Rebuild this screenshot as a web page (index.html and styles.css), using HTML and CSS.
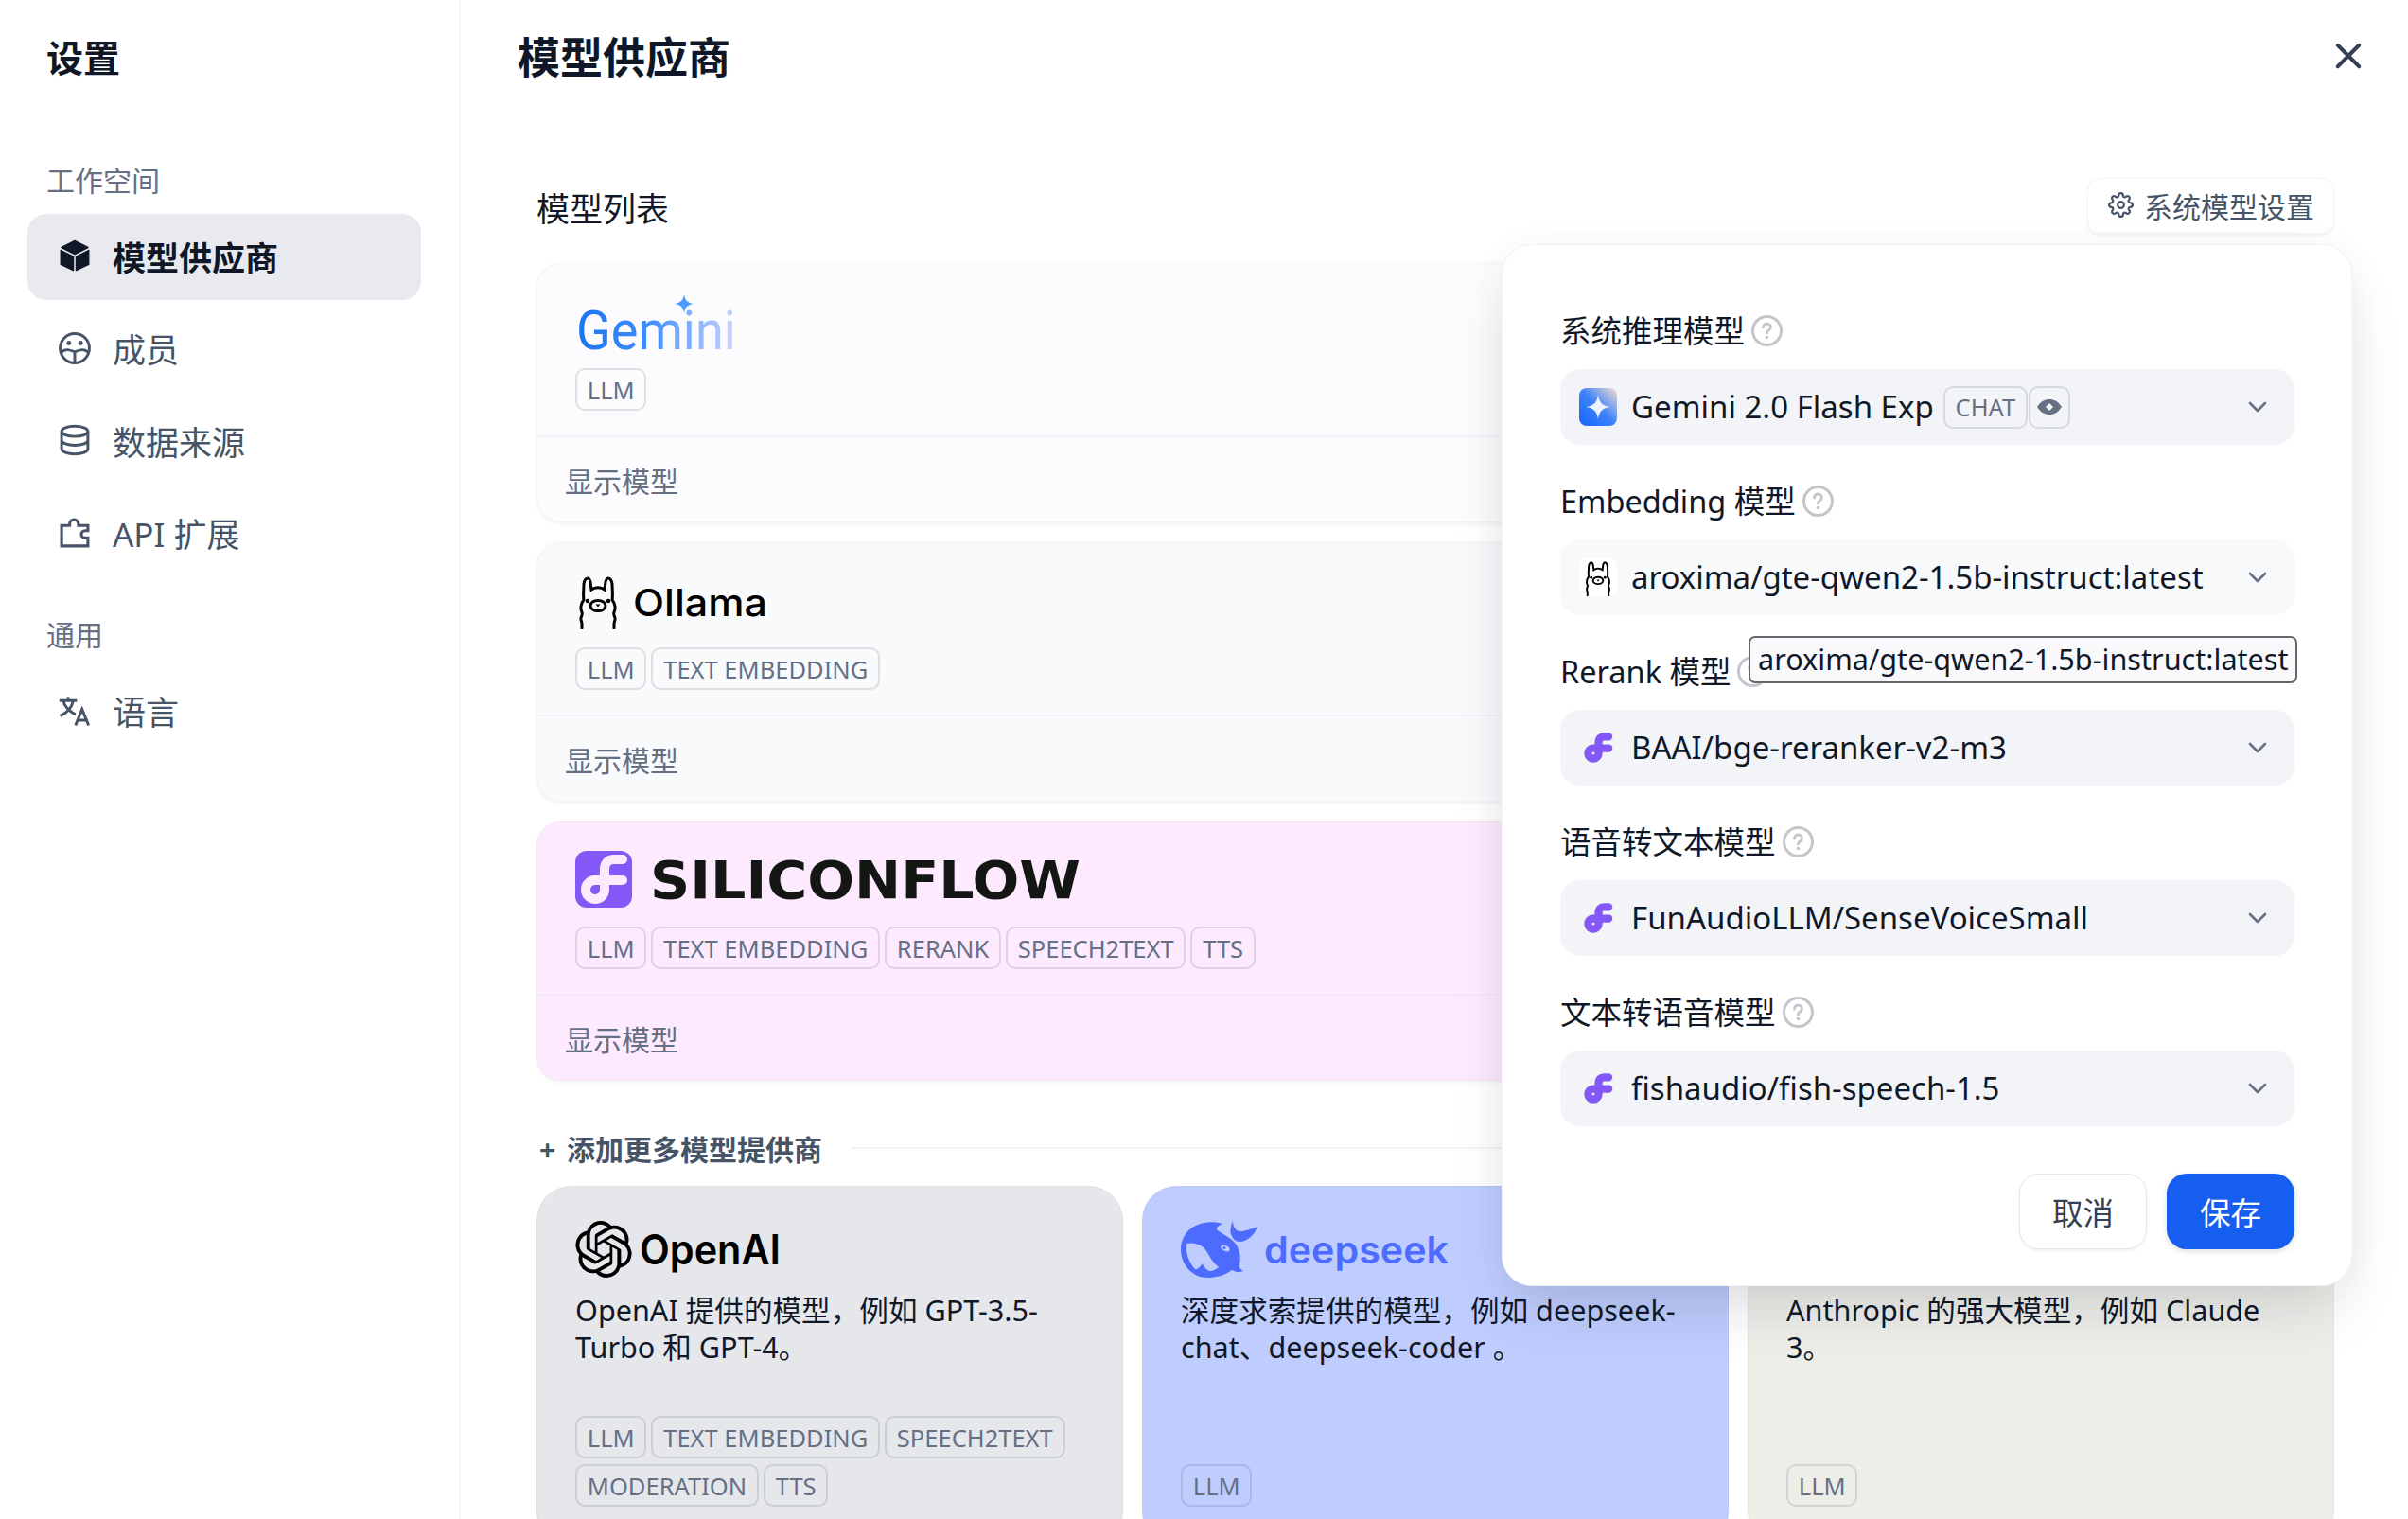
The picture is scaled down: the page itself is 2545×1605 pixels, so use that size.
FILE: index.html
```html
<!DOCTYPE html>
<html lang="zh-CN">

<head>
  <meta charset="UTF-8">
  <meta name="viewport" content="width=device-width, initial-scale=1.0">
  <title>设置 - 模型供应商</title>
  <link rel="stylesheet" href="styles.css">
</head>

<body>
  <svg class="sprite" aria-hidden="true">
    <defs>
      <linearGradient id="geminiText" x1="0" y1="0" x2="1" y2="0">
        <stop offset="0" stop-color="#1a74f5" />
        <stop offset="0.45" stop-color="#3f8dfd" />
        <stop offset="1" stop-color="#c9d3fc" />
      </linearGradient>
      <linearGradient id="geminiBox" x1="0" y1="1" x2="1" y2="0">
        <stop offset="0" stop-color="#1366ff" />
        <stop offset="0.5" stop-color="#3d82fb" />
        <stop offset="1" stop-color="#f6dccb" />
      </linearGradient>
      <symbol id="llama" viewBox="0 0 40 56">
        <g fill="none" stroke="#000" stroke-width="3" stroke-linecap="round">
          <path d="M3 55V50C3 48 1.500 46 2 44C2.500 42 4 40 3 38C1 34 2 28 5 25C4 20 5 14 5 8C6 1 11 0 12 6L13 14C17 11 23 11 27 14L28 6C29 0 34 1 35 8C35 14 36 20 35 25C38 28 39 34 37 38C36 40 37.500 42 38 44C38.500 46 37 48 37 50V55" />
          <ellipse cx="20" cy="31" rx="8" ry="5.500" />
        </g>
        <circle cx="9" cy="26" r="2.200" />
        <circle cx="31" cy="26" r="2.200" />
        <path d="M17.500 29.500H22.500L20 32.500Z" />
      </symbol>
      <symbol id="flow" viewBox="0 0 60 60">
        <path fill="none" stroke="currentColor" stroke-width="10" stroke-linecap="round" d="M50 9H41C35 9 31 13 31 19V41A10 10 0 1 1 20 31H50" />
      </symbol>
      <symbol id="flowSmall" viewBox="-6 -6 72 72">
        <path fill="none" stroke="currentColor" stroke-width="15" stroke-linecap="round" d="M50 9H41C35 9 31 13 31 19V41A10 10 0 1 1 20 31H50" />
      </symbol>
      <symbol id="help" viewBox="0 0 33 33">
        <circle cx="16.500" cy="16.500" r="15" fill="none" stroke="#c4c6cc" stroke-width="3" />
        <path fill="none" stroke="#c4c6cc" stroke-width="2.800" stroke-linecap="round" d="M12.500 13C12.500 10.500 14.500 9 16.500 9C19 9 20.500 10.800 20.500 12.800C20.500 15.800 16.500 16 16.500 19" />
        <circle cx="16.500" cy="23.500" r="1.800" fill="#c4c6cc" />
      </symbol>
      <symbol id="chevron" viewBox="0 0 20 12">
        <path fill="none" stroke="#667085" stroke-width="2.600" stroke-linecap="round" stroke-linejoin="round" d="M2 2L10 10L18 2" />
      </symbol>
    </defs>
  </svg>

  <div class="app">
    <aside class="sidebar">
      <h1 class="sidebar-title">设置</h1>

      <div class="group-label">工作空间</div>
      <a class="menu-item active">
        <svg class="menu-icon" viewBox="1 1 22 22">
          <path fill="#101828" stroke="#101828" stroke-width="1" stroke-linejoin="round" d="M12 2L21 6.500L12 11L3 6.500ZM2.500 8.500L11 12.800V22L2.500 18ZM21.500 8.500L13 12.800V22L21.500 18Z" />
        </svg>
        模型供应商
      </a>
      <a class="menu-item">
        <svg class="menu-icon" viewBox="1 1 22 22" fill="none" stroke="#475467" stroke-width="1.900">
          <circle cx="12" cy="12" r="10" />
          <path d="M2.500 15C5.500 12 8.500 13 12 14.500C15.500 13 18.500 12 21.500 15M12 14.500V22" />
          <circle cx="8" cy="8.500" r="1.600" fill="#475467" stroke="none" />
          <circle cx="16" cy="8.500" r="1.600" fill="#475467" stroke="none" />
        </svg>
        成员
      </a>
      <a class="menu-item">
        <svg class="menu-icon" viewBox="1 1 22 22" fill="none" stroke="#475467" stroke-width="1.900">
          <ellipse cx="12" cy="6" rx="9" ry="3.500" />
          <path d="M3 6V18C3 20 7 21.500 12 21.500S21 20 21 18V6M3 12C3 14 7 15.500 12 15.500S21 14 21 12" />
        </svg>
        数据来源
      </a>
      <a class="menu-item">
        <svg class="menu-icon" viewBox="1 1 22 22" fill="none" stroke="#475467" stroke-width="2">
          <path d="M3 21V7H8.500V6A3 3 0 0 1 14.500 6V7H21V10.500H19A2.300 2.300 0 0 0 19 15.500H21V21Z" />
        </svg>
        API 扩展
      </a>

      <div class="group-label group-label-next">通用</div>
      <a class="menu-item">
        <svg class="menu-icon" viewBox="1 1 22 22" fill="none" stroke="#475467" stroke-width="1.900">
          <path d="M1.500 5H13.500M7.500 2.500V5M11 5C10 10 6.500 13.500 2 15.500M4 5C5 9 8.500 12.500 12.500 14.500M12.500 22L17 11L21.500 22M14 18.500H20" />
        </svg>
        语言
      </a>
    </aside>

    <main class="main">
      <header class="main-head">
        <h2 class="main-title">模型供应商</h2>
        <svg class="close-icon" viewBox="0 0 24 24" fill="none" stroke="#344054" stroke-width="3.200" stroke-linecap="round">
          <path d="M3 3L21 21M21 3L3 21" />
        </svg>
      </header>

      <section class="models">
        <div class="models-head">
          <span class="models-title">模型列表</span>
          <button class="system-btn" type="button">
            <svg class="gear-icon" viewBox="0 0 24 24" fill="none" stroke="#475467" stroke-width="2">
              <circle cx="12" cy="12" r="3" />
              <path d="M19.400 15a1.650 1.650 0 0 0 .33 1.820l.06.06a2 2 0 0 1 0 2.830 2 2 0 0 1-2.830 0l-.06-.06a1.650 1.650 0 0 0-1.820-.33 1.650 1.650 0 0 0-1 1.510V21a2 2 0 0 1-2 2 2 2 0 0 1-2-2v-.09A1.650 1.650 0 0 0 9 19.400a1.650 1.650 0 0 0-1.820.33l-.06.06a2 2 0 0 1-2.830 0 2 2 0 0 1 0-2.830l.06-.06a1.650 1.650 0 0 0 .33-1.820 1.650 1.650 0 0 0-1.510-1H3a2 2 0 0 1-2-2 2 2 0 0 1 2-2h.09A1.650 1.650 0 0 0 4.600 9a1.650 1.650 0 0 0-.33-1.820l-.06-.06a2 2 0 0 1 0-2.830 2 2 0 0 1 2.830 0l.06.06a1.650 1.650 0 0 0 1.820.33H9a1.650 1.650 0 0 0 1-1.510V3a2 2 0 0 1 2-2 2 2 0 0 1 2 2v.09a1.650 1.650 0 0 0 1 1.510 1.650 1.650 0 0 0 1.820-.33l.06-.06a2 2 0 0 1 2.830 0 2 2 0 0 1 0 2.830l-.06.06a1.650 1.650 0 0 0-.33 1.820V9a1.650 1.650 0 0 0 1.510 1H21a2 2 0 0 1 2 2 2 2 0 0 1-2 2h-.09a1.650 1.650 0 0 0-1.510 1z" />
            </svg>
            系统模型设置
          </button>
        </div>

        <div class="provider gemini">
          <div class="provider-top">
            <svg class="logo" width="180" height="60" viewBox="0 0 180 60">
              <path fill="#4b9dff" d="M115 2C116 8 118 10.500 125 12C118 13.500 116 16 115 22C114 16 112 13.500 105 12C112 10.500 114 8 115 2Z" />
              <text class="logo-gemini" x="1" y="60" textLength="169" lengthAdjust="spacingAndGlyphs" fill="url(#geminiText)">Gemini</text>
            </svg>
            <div class="tags"><span class="tag">LLM</span></div>
          </div>
          <div class="provider-foot">显示模型</div>
        </div>

        <div class="provider ollama">
          <div class="provider-top">
            <svg class="logo" width="210" height="60" viewBox="0 0 210 60">
              <use href="#llama" x="4" y="5" width="40" height="56" />
              <text class="logo-ollama" x="61" y="47" textLength="142" lengthAdjust="spacingAndGlyphs">Ollama</text>
            </svg>
            <div class="tags"><span class="tag">LLM</span><span class="tag">TEXT EMBEDDING</span></div>
          </div>
          <div class="provider-foot">显示模型</div>
        </div>

        <div class="provider silicon">
          <div class="provider-top">
            <svg class="logo" width="540" height="60" viewBox="0 0 540 60">
              <rect width="60" height="60" rx="12" fill="#8358f6" />
              <use href="#flow" class="flow-white" width="60" height="60" />
              <text class="logo-silicon" x="79" y="50" textLength="455" lengthAdjust="spacingAndGlyphs">SILICONFLOW</text>
            </svg>
            <div class="tags">
              <span class="tag">LLM</span><span class="tag">TEXT EMBEDDING</span><span class="tag">RERANK</span><span class="tag">SPEECH2TEXT</span><span class="tag">TTS</span>
            </div>
          </div>
          <div class="provider-foot">显示模型</div>
        </div>

        <div class="add-head">
          <span class="add-title">+ 添加更多模型提供商</span>
          <span class="add-line"></span>
        </div>

        <div class="add-grid">
          <div class="add-card openai">
            <svg class="logo" width="230" height="60" viewBox="0 0 230 60">
              <svg x="0" y="0" width="60" height="60" viewBox="0 0 24 24">
                <path d="M22.282 9.821a5.985 5.985 0 0 0-.516-4.911 6.046 6.046 0 0 0-6.51-2.9A6.065 6.065 0 0 0 4.981 4.182a5.985 5.985 0 0 0-3.998 2.9 6.046 6.046 0 0 0 .743 7.097 5.98 5.98 0 0 0 .511 4.911 6.051 6.051 0 0 0 6.515 2.9A5.985 5.985 0 0 0 13.26 24a6.056 6.056 0 0 0 5.772-4.206 5.99 5.99 0 0 0 3.997-2.9 6.056 6.056 0 0 0-.747-7.073zM13.26 22.429a4.476 4.476 0 0 1-2.876-1.041l.142-.08 4.778-2.758a.795.795 0 0 0 .393-.681v-6.737l2.02 1.169a.071.071 0 0 1 .038.052v5.583a4.504 4.504 0 0 1-4.495 4.493zm-9.661-4.125a4.471 4.471 0 0 1-.535-3.014l.142.085 4.783 2.758a.771.771 0 0 0 .781 0l5.843-3.369v2.333a.08.08 0 0 1-.033.061L9.74 19.95a4.499 4.499 0 0 1-6.141-1.646zM2.341 7.896a4.485 4.485 0 0 1 2.366-1.973V11.6a.766.766 0 0 0 .388.677l5.814 3.354-2.02 1.169a.076.076 0 0 1-.071 0l-4.83-2.787A4.504 4.504 0 0 1 2.341 7.872zm16.596 3.856L13.104 8.364 15.119 7.2a.076.076 0 0 1 .071 0l4.83 2.791a4.494 4.494 0 0 1-.676 8.105v-5.678a.79.79 0 0 0-.407-.667zm2.011-3.023l-.142-.085-4.774-2.782a.776.776 0 0 0-.785 0L9.409 9.23V6.897a.066.066 0 0 1 .028-.061l4.83-2.787a4.499 4.499 0 0 1 6.68 4.66zM8.307 12.863l-2.02-1.164a.08.08 0 0 1-.038-.057V6.074a4.499 4.499 0 0 1 7.376-3.454l-.142.081L8.704 5.46a.795.795 0 0 0-.393.681zm1.097-2.365l2.602-1.5 2.607 1.5v3l-2.597 1.5-2.607-1.5z" />
              </svg>
              <text class="logo-openai" x="68" y="46" textLength="149" lengthAdjust="spacingAndGlyphs">OpenAI</text>
            </svg>
            <p class="add-desc">OpenAI 提供的模型，例如 GPT-3.5-Turbo 和 GPT-4。</p>
            <div class="tags add-tags">
              <span class="tag">LLM</span><span class="tag">TEXT EMBEDDING</span><span class="tag">SPEECH2TEXT</span><span class="tag">MODERATION</span><span class="tag">TTS</span>
            </div>
          </div>

          <div class="add-card deepseek">
            <svg class="logo" width="300" height="60" viewBox="0 0 300 60">
              <path fill="#4d6bfe" d="M25 2C31 1 38 1 44 3C40 5 37 7 38 9C40 12 50 16 56 22C62 28 64 38 62 46C61 49 63 51 66 53C62 55 58 54 54 52C46 58 36 60 28 60C12 60 0 46 0 30C0 15 11 4 25 2Z" />
              <path fill="#4d6bfe" d="M55 0C55 4 56 7 58 9C61 12 66 12 81 6C79 11 77 15 71 19C67 22 62 23 58 21C54 18 51 12 53 7C53 4 54 2 55 0Z" />
              <path fill="#bfcdfe" d="M6 24C14 22 23 25 27 32C31 39 35 45 40 49C35 53 31 54 28 52C25 49 23 47 23 45C20 49 17 52 15 51C8 43 5 33 6 24Z" />
              <ellipse cx="47" cy="29" rx="5" ry="2.800" fill="#bfcdfe" transform="rotate(25 47 29)" />
              <circle cx="46" cy="28.500" r="1.500" fill="#4d6bfe" />
              <text class="logo-deepseek" x="88" y="45" textLength="195" lengthAdjust="spacingAndGlyphs">deepseek</text>
            </svg>
            <p class="add-desc">深度求索提供的模型，例如 deepseek-chat、deepseek-coder 。</p>
            <div class="tags add-tags"><span class="tag">LLM</span></div>
          </div>

          <div class="add-card anthropic">
            <div class="logo-blank"></div>
            <p class="add-desc">Anthropic 的强大模型，例如 Claude 3。</p>
            <div class="tags add-tags"><span class="tag">LLM</span></div>
          </div>
        </div>
      </section>

      <div class="modal">
        <div class="field">
          <div class="field-label">系统推理模型 <svg class="help-icon"><use href="#help" /></svg></div>
          <div class="select">
            <svg class="select-icon" viewBox="0 0 40 40">
              <rect width="40" height="40" rx="8" fill="url(#geminiBox)" />
              <path fill="#eef3ff" d="M20 7C21 15 24.500 19 33 20C24.500 21 21 25 20 33C19 25 15.500 21 7 20C15.500 19 19 15 20 7Z" />
            </svg>
            <span class="select-text">Gemini 2.0 Flash Exp</span>
            <span class="tag select-tag">CHAT</span>
            <span class="tag select-tag tag-vision">
              <svg class="vision-icon" viewBox="0 0 26 16">
                <path fill="#667085" d="M0 8C4 2 8 0 13 0S22 2 26 8C22 14 18 16 13 16S4 14 0 8Z" />
                <path fill="#f2f4f7" d="M13 4L17 8L13 12L9 8Z" />
              </svg>
            </span>
            <svg class="chevron-icon"><use href="#chevron" /></svg>
          </div>
        </div>

        <div class="field">
          <div class="field-label">Embedding 模型 <svg class="help-icon"><use href="#help" /></svg></div>
          <div class="select select-hover">
            <svg class="select-icon" viewBox="0 0 40 40">
              <rect width="40" height="40" rx="8" fill="#fff" />
              <use href="#llama" x="6" y="3" width="28" height="37" />
            </svg>
            <span class="select-text">aroxima/gte-qwen2-1.5b-instruct:latest</span>
            <svg class="chevron-icon"><use href="#chevron" /></svg>
          </div>
        </div>

        <div class="field">
          <div class="field-label">Rerank 模型 <svg class="help-icon"><use href="#help" /></svg></div>
          <div class="select">
            <svg class="select-icon flow-purple"><use href="#flowSmall" /></svg>
            <span class="select-text">BAAI/bge-reranker-v2-m3</span>
            <svg class="chevron-icon"><use href="#chevron" /></svg>
          </div>
        </div>

        <div class="field">
          <div class="field-label">语音转文本模型 <svg class="help-icon"><use href="#help" /></svg></div>
          <div class="select">
            <svg class="select-icon flow-purple"><use href="#flowSmall" /></svg>
            <span class="select-text">FunAudioLLM/SenseVoiceSmall</span>
            <svg class="chevron-icon"><use href="#chevron" /></svg>
          </div>
        </div>

        <div class="field">
          <div class="field-label">文本转语音模型 <svg class="help-icon"><use href="#help" /></svg></div>
          <div class="select">
            <svg class="select-icon flow-purple"><use href="#flowSmall" /></svg>
            <span class="select-text">fishaudio/fish-speech-1.5</span>
            <svg class="chevron-icon"><use href="#chevron" /></svg>
          </div>
        </div>

        <div class="modal-foot">
          <button class="btn btn-cancel" type="button">取消</button>
          <button class="btn btn-save" type="button">保存</button>
        </div>

        <div class="tooltip">aroxima/gte-qwen2-1.5b-instruct:latest</div>
      </div>
    </main>
  </div>
</body>

</html>
```

FILE: styles.css
```css
* {
  box-sizing: border-box;
}

html,
body {
  margin: 0;
  height: 100%;
  overflow: hidden;
}

body {
  font-family: "Noto Sans", "Noto Sans CJK SC", sans-serif;
  background-color: #fff;
  color: #101828;
}

.sprite {
  position: absolute;
  width: 0;
  height: 0;
}

.app {
  display: flex;
  height: 1605px;
  overflow: hidden;
}

/* sidebar */
.sidebar {
  width: 487px;
  flex-shrink: 0;
  padding: 0 40px 0 29px;
  border-right: 2px solid #f5f6f8;
}

.sidebar-title {
  margin: 0;
  padding-left: 20px;
  height: 122px;
  line-height: 122px;
  font-size: 39px;
  font-weight: 700;
}

.group-label {
  display: flex;
  align-items: center;
  height: 104px;
  padding: 29px 0 0 20px;
  font-size: 30px;
  color: #667085;
}

.group-label-next {
  height: 90.500px;
  padding-top: 16px;
}

.menu-item {
  display: flex;
  align-items: center;
  height: 91px;
  margin-bottom: 6.500px;
  padding: 0 0 3px 33px;
  border-radius: 20px;
  font-size: 35px;
  color: #475467;
}

.menu-item.active {
  background-color: #e9eaef;
  color: #101828;
  font-weight: 700;
}

.menu-icon {
  width: 34px;
  height: 34px;
  margin-right: 23px;
  flex-shrink: 0;
}

/* main column */
.main {
  position: relative;
  flex: 1;
  min-width: 0;
  padding: 0 78px 0 60px;
}

.main-head {
  display: flex;
  justify-content: space-between;
  align-items: center;
  height: 122px;
}

.main-title {
  margin: 0 0 5px;
  font-size: 45px;
  font-weight: 700;
}

.close-icon {
  width: 30px;
  height: 30px;
  margin: 0 -30px 4px 0;
}

.models {
  margin-left: 20px;
}

.models-head {
  display: flex;
  justify-content: space-between;
  align-items: center;
  margin-top: 66px;
  margin-bottom: 31px;
}

.models-title {
  padding-top: 2px;
  font-size: 35px;
}

.system-btn {
  display: flex;
  align-items: center;
  height: 59px;
  width: 261px;
  padding: 0 0 2px 21px;
  border: 1.500px solid #f2f4f7;
  border-radius: 13px;
  background-color: #fff;
  box-shadow: 0 1.500px 3px rgba(16, 24, 40, 0.05);
  font-family: inherit;
  font-size: 30px;
  color: #475467;
}

.gear-icon {
  width: 27px;
  height: 27px;
  margin-right: 11px;
}

/* provider cards */
.provider {
  height: 274px;
  margin-bottom: 21px;
  border: 1.500px solid #f2f4f7;
  border-radius: 26px;
  box-shadow: 0 1.500px 4px rgba(16, 24, 40, 0.05);
  overflow: hidden;
}

.provider.gemini {
  background-color: #fcfcfe;
}

.provider.ollama {
  background-color: #f9fafc;
}

.provider.silicon {
  background-color: #fdeafe;
  border-color: #f6e4f6;
}

.provider-top {
  height: 183px;
  padding: 30px 40px 0;
  border-bottom: 2px solid #f2f4f7;
}

.silicon .provider-top {
  border-bottom-color: #f5e8f6;
}

.provider-foot {
  display: flex;
  align-items: center;
  height: 89px;
  padding-left: 29px;
  font-size: 30px;
  color: #667085;
}

.logo {
  display: block;
  flex-shrink: 0;
  overflow: visible;
}

.logo-gemini {
  font-family: Roboto, sans-serif;
  font-size: 58px;
}

.logo-ollama {
  font-family: Inter, sans-serif;
  font-size: 40px;
  font-weight: 500;
}

.logo-silicon {
  font-family: "DejaVu Sans", sans-serif;
  font-size: 55px;
  font-weight: 700;
  fill: #141614;
}

.logo-openai {
  font-family: Inter, sans-serif;
  font-size: 44px;
  font-weight: 600;
}

.logo-deepseek {
  font-family: Inter, sans-serif;
  font-size: 40px;
  font-weight: 600;
  fill: #4d6bfe;
}

.flow-white {
  color: #fdeafe;
}

.flow-purple {
  color: #8358f6;
}

.tags {
  display: flex;
  flex-wrap: wrap;
  gap: 6px 5px;
  margin-top: 20px;
}

.tag {
  display: inline-flex;
  align-items: center;
  height: 45px;
  padding: 0 10.800px;
  border: 2px solid rgba(16, 24, 40, 0.12);
  border-radius: 10px;
  font-size: 25.500px;
  color: #667085;
}

/* add more */
.add-head {
  display: flex;
  align-items: center;
  height: 40px;
  margin-top: 51px;
  margin-bottom: 20px;
  padding-left: 3px;
}

.add-title {
  font-size: 30px;
  font-weight: 700;
  word-spacing: 4px;
  color: #475467;
}

.add-line {
  flex: 1;
  height: 2px;
  margin-left: 30px;
  background-color: #f2f4f7;
}

.add-grid {
  display: grid;
  grid-template-columns: repeat(3, 1fr);
  gap: 20px;
}

.add-card {
  display: flex;
  flex-direction: column;
  height: 380px;
  padding: 36px 40px;
  border: 1.500px solid rgba(16, 24, 40, 0.03);
  border-radius: 37px;
}

.add-card.openai {
  background-color: #e5e7eb;
}

.add-card.deepseek {
  background-color: #bfcdfe;
}

.add-card.anthropic {
  background-color: #eeeee9;
}

.logo-blank {
  height: 60px;
  flex-shrink: 0;
}

.add-desc {
  margin: 15px 0 0;
  font-size: 30.600px;
  line-height: 39px;
  color: #101828;
}

.add-card .tags {
  margin-top: auto;
  margin-bottom: 4px;
}

/* system model modal */
.modal {
  position: absolute;
  top: 258px;
  right: 59px;
  width: 899px;
  height: 1101px;
  padding: 72px 60px 40px 61px;
  border: 1.500px solid #f2f4f7;
  border-radius: 32px;
  background-color: #fff;
  box-shadow: 0 32px 64px -12px rgba(16, 24, 40, 0.14), 0 0 40px rgba(16, 24, 40, 0.03);
}

.field {
  margin-bottom: 41px;
}

.field-label {
  display: flex;
  align-items: center;
  gap: 7px;
  height: 40px;
  margin-bottom: 19px;
  padding-bottom: 7px;
  font-size: 32.500px;
}

.help-icon {
  width: 33px;
  height: 33px;
  flex-shrink: 0;
  margin-top: 3px;
}

.select {
  display: flex;
  align-items: center;
  height: 80px;
  padding: 0 29px 0 20px;
  border-radius: 21px;
  background-color: #f2f4f7;
}

.select-hover {
  background-color: #f8f9fb;
}

.select-icon {
  width: 40px;
  height: 40px;
  margin-right: 15px;
  flex-shrink: 0;
}

.select-text {
  margin-right: 10px;
  padding-bottom: 2px;
  font-size: 33px;
  white-space: nowrap;
}

.select-tag {
  margin-right: 1px;
}

.tag-vision {
  padding: 0 7px;
}

.vision-icon {
  width: 26px;
  height: 16px;
}

.chevron-icon {
  width: 20px;
  height: 12px;
  margin-left: auto;
  flex-shrink: 0;
}

.modal-foot {
  display: flex;
  justify-content: flex-end;
  gap: 21px;
  margin-top: 50px;
}

.btn {
  width: 135px;
  height: 80px;
  padding-bottom: 2px;
  border-radius: 21px;
  font-family: inherit;
  font-size: 32.500px;
}

.btn-cancel {
  border: 1.500px solid #e4e7ec;
  background-color: #fff;
  color: #344054;
  box-shadow: 0 1.500px 3px rgba(16, 24, 40, 0.05);
}

.btn-save {
  border: none;
  background-color: #155eef;
  color: #fff;
  box-shadow: 0 2px 6px rgba(16, 24, 40, 0.15);
}

.tooltip {
  position: absolute;
  left: 260px;
  top: 413px;
  width: 580px;
  height: 50px;
  padding-left: 8px;
  border: 2px solid #66666c;
  border-radius: 7px;
  background-color: #f9f9fb;
  font-size: 30.600px;
  line-height: 44px;
  white-space: nowrap;
}
```
